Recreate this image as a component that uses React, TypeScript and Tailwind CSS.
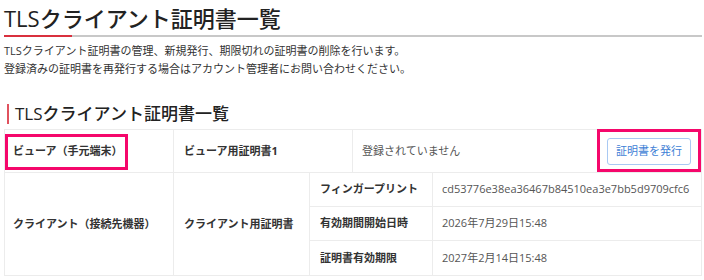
import React from 'react'

const font = { fontFamily: '"Open Sans", "Noto Sans CJK JP", sans-serif' }

const rows = [
  { label: 'フィンガープリント', value: 'cd53776e38ea36467b84510ea3e7bb5d9709cfc6' },
  { label: '有効期間開始日時', value: '2026年7月29日15:48' },
  { label: '証明書有効期限', value: '2027年2月14日15:48' },
]

export default function App() {
  return (
    <div className="w-[704px] h-[280px] bg-white overflow-hidden" style={font}>
      <div className="pl-1 pr-0.5">
        <h1 className="pt-[3px] text-[22px] leading-[30px] font-medium text-[#222]">
          TLSクライアント証明書一覧
        </h1>
        <div className="mt-[2px] h-[2px] bg-[#c8c8c8] flex">
          <div className="w-[68px] h-full bg-[#d9303e]" />
        </div>
        <div className="mt-[5px] text-[11px] leading-[18px] text-[#333]">
          <p>TLSクライアント証明書の管理、新規発行、期限切れの証明書の削除を行います。</p>
          <p>登録済みの証明書を再発行する場合はアカウント管理者にお問い合わせください。</p>
        </div>

        <h2 className="mt-[25px] flex items-center gap-[6px] text-[17px] leading-[22px] font-medium text-[#222]">
          <span className="w-[2px] h-[20px] bg-[#e0525e] ml-[3px]" />
          TLSクライアント証明書一覧
        </h2>

        <div className="mt-[4px] border border-[#ececec] text-[11px] text-[#333]">
          <div className="relative flex h-[43px] border-b border-[#ececec]">
            <div className="w-[169px] flex items-center pl-[8px] font-bold border-r border-[#ececec]">
              ビューア（手元端末）
            </div>
            <div className="w-[179px] flex items-center pl-[10px] font-bold border-r border-[#ececec]">
              ビューア用証明書1
            </div>
            <div className="flex-1 flex items-center pl-[9px] text-[#555]">登録されていません</div>
            <div className="w-[104px] flex items-center justify-center">
              <button className="h-[27px] px-[8px] rounded-[3px] border border-[#a9c9f3] text-[#3f7fd6] text-[11px] bg-white">
                証明書を発行
              </button>
            </div>
            <div className="absolute left-0 top-[4px] w-[123px] h-[36px] border-[3px] border-[#f5076b] pointer-events-none" />
            <div className="absolute right-0 top-[-1px] w-[104px] h-[43px] border-[3px] border-[#f5076b] pointer-events-none" />
          </div>
          <div className="flex">
            <div className="w-[169px] flex items-center pl-[8px] font-bold border-r border-[#ececec]">
              クライアント（接続先機器）
            </div>
            <div className="w-[136px] flex items-center pl-[10px] font-bold border-r border-[#ececec]">
              クライアント用証明書
            </div>
            <div className="flex-1">
              {rows.map((r, i) => (
                <div
                  key={r.label}
                  className={
                    'flex h-[34px] ' + (i < rows.length - 1 ? 'border-b border-[#ececec]' : '')
                  }
                >
                  <div className="w-[123px] flex items-center pl-[10px] font-bold border-r border-[#ececec]">
                    {r.label}
                  </div>
                  <div className="flex-1 flex items-center pl-[9px] text-[#555]">{r.value}</div>
                </div>
              ))}
            </div>
          </div>
        </div>
      </div>
    </div>
  )
}
